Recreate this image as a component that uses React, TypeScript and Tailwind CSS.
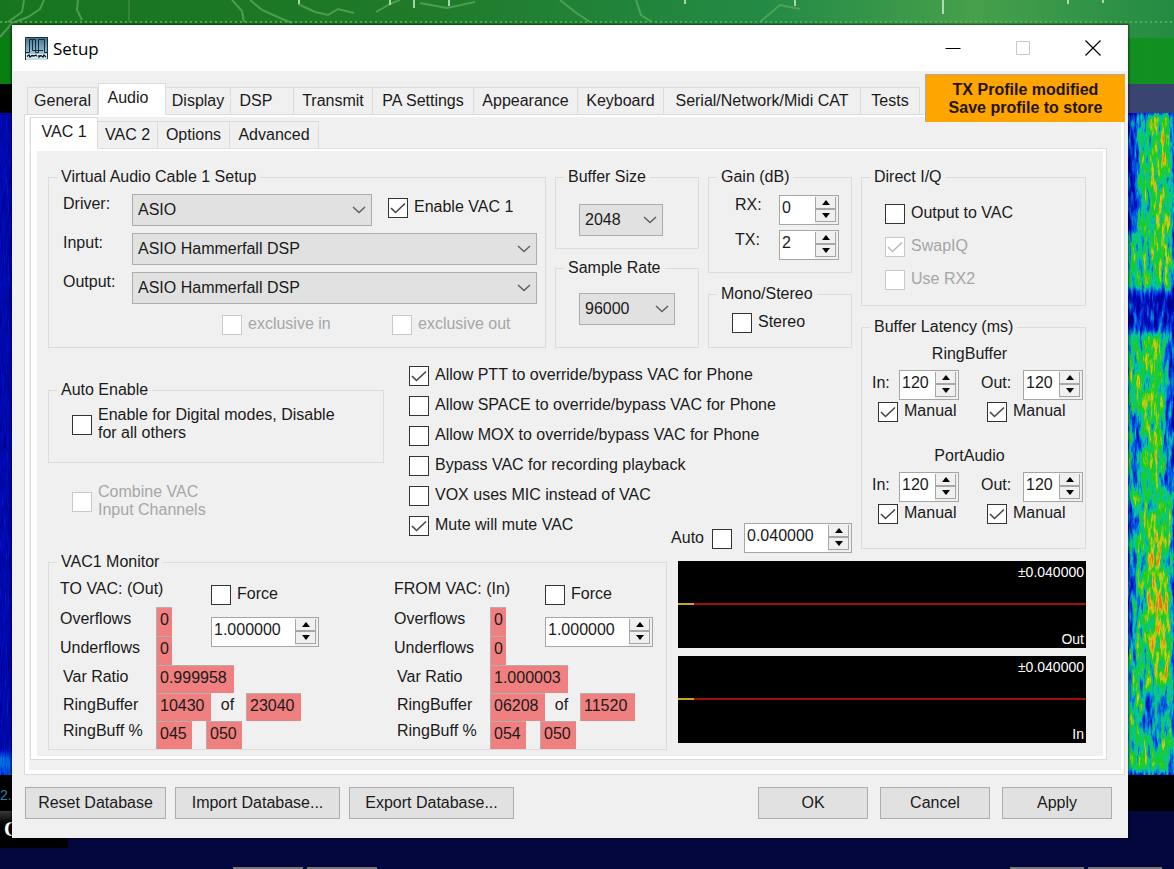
import React, { useId, useState } from "react";
import clsx from "clsx";

const MAIN_TABS = ["General", "Audio", "Display", "DSP", "Transmit", "PA Settings", "Appearance", "Keyboard", "Serial/Network/Midi CAT", "Tests"];
const SUB_TABS = ["VAC 1", "VAC 2", "Options", "Advanced"];

const MAIN_TAB_WIDTHS: Record<string, string> = {
  General: "w-[71px]",
  Audio: "w-[68px] pr-2",
  Display: "w-[65px]",
  DSP: "w-[63px] pr-3",
  Transmit: "w-[79px]",
  "PA Settings": "w-[101px]",
  Appearance: "w-[104px]",
  Keyboard: "w-[86px]",
  "Serial/Network/Midi CAT": "w-[197px]",
  Tests: "w-[59px]",
};

const SUB_TAB_WIDTHS: Record<string, string> = {
  "VAC 1": "w-[68px]",
  "VAC 2": "w-[60px]",
  Options: "w-[72px]",
  Advanced: "w-[89px]",
};

interface TabsProps {
  tabs: string[];
  widths: Record<string, string>;
  active: string;
  onSelect: (tab: string) => void;
  label: string;
}

const Tabs: React.FC<TabsProps> = ({ tabs, widths, active, onSelect, label }) => (
  <div role="tablist" aria-label={label} className="relative z-10 -mb-px flex items-end">
    {tabs.map((tab) => (
      <button
        key={tab}
        role="tab"
        aria-selected={tab === active}
        onClick={() => onSelect(tab)}
        className={clsx(
          "shrink-0 whitespace-nowrap border border-[#dcdcdc]",
          widths[tab],
          tab === active ? "h-8 border-b-white bg-white pb-0.5" : "h-7 border-l-0 bg-[#f0f0f0] first:border-l",
        )}
      >
        {tab}
      </button>
    ))}
  </div>
);

interface GroupProps {
  title: string;
  className?: string;
  children: React.ReactNode;
}

const Group: React.FC<GroupProps> = ({ title, className, children }) => (
  <fieldset className={clsx("min-w-0 border border-[#dcdcdc]", className)}>
    <legend className="ml-2 px-1 leading-[18px]">{title}</legend>
    {children}
  </fieldset>
);

interface CheckProps {
  label: string;
  checked?: boolean;
  disabled?: boolean;
  labelFirst?: boolean;
  className?: string;
}

const Check: React.FC<CheckProps> = ({ label, checked = false, disabled = false, labelFirst = false, className }) => {
  const [on, setOn] = useState(checked);
  return (
    <label className={clsx("flex items-center gap-1.5 leading-[18px]", labelFirst && "flex-row-reverse gap-2", disabled && "text-[#a6a6a6]", className)}>
      <span className="relative flex size-5 shrink-0">
        <input
          type="checkbox"
          checked={on}
          disabled={disabled}
          onChange={(e) => setOn(e.target.checked)}
          className="size-5 appearance-none border border-[#333] bg-white disabled:border-[#c8c8c8]"
        />
        {on && (
          <svg viewBox="0 0 20 20" className={clsx("pointer-events-none absolute inset-0 size-5", disabled ? "text-[#bdbdbd]" : "text-[#444]")}>
            <path d="M3 10 7.500 14.500 17 5.500" fill="none" stroke="currentColor" strokeWidth="1.600" />
          </svg>
        )}
      </span>
      <span className="whitespace-pre pb-0.5">{label}</span>
    </label>
  );
};

interface DropDownProps {
  id?: string;
  label?: string;
  options: string[];
  className?: string;
}

const DropDown: React.FC<DropDownProps> = ({ id, label, options, className }) => (
  <div className={clsx("relative", className)}>
    <select id={id} aria-label={label} className="h-8 w-full appearance-none border border-[#adadad] bg-[#e1e1e1] pl-[5px] outline-none">
      {options.map((option) => (
        <option key={option}>{option}</option>
      ))}
    </select>
    <svg viewBox="0 0 14 8" className="pointer-events-none absolute right-1.5 top-3 h-2 w-3.5">
      <path d="M1 1 7 6.500 13 1" fill="none" stroke="#606060" strokeWidth="1.500" />
    </svg>
  </div>
);

interface SpinProps {
  id?: string;
  label?: string;
  initial: number;
  digits?: number;
  step?: number;
  className?: string;
}

const Spin: React.FC<SpinProps> = ({ id, label, initial, digits = 0, step = 1, className }) => {
  const [value, setValue] = useState(initial.toFixed(digits));
  const bump = (by: number) => setValue((Number(value) + by).toFixed(digits));

  return (
    <div className={clsx("flex h-[30px] shrink-0 border border-[#a6a6a6] bg-[#f0f0f0]", className)}>
      <input id={id} aria-label={label} value={value} onChange={(e) => setValue(e.target.value)} className="w-0 min-w-0 grow bg-white pb-1 pl-0.5 outline-none" />
      <div className="mr-0.5 flex w-[21px] flex-col pb-0.5 pt-px">
        <button aria-label="Increase" onClick={() => bump(step)} className="flex grow items-center justify-center border-x border-b border-[#a6a6a6]">
          <svg viewBox="0 0 8 5" className="h-[5px] w-2"><path d="M0 5 4 0 8 5Z" /></svg>
        </button>
        <button aria-label="Decrease" onClick={() => bump(-step)} className="flex grow items-center justify-center border border-[#a6a6a6]">
          <svg viewBox="0 0 8 5" className="h-[5px] w-2"><path d="M0 0 4 5 8 0Z" /></svg>
        </button>
      </div>
    </div>
  );
};

const LatencyBlock: React.FC<{ title: string }> = ({ title }) => (
  <div>
    <div className="pr-2 text-center">{title}</div>
    <div className="mt-1.5 flex justify-between pl-2.5 pr-0.5">
      {["In", "Out"].map((dir) => (
        <div key={dir}>
          <div className="flex justify-between">
            <label htmlFor={`${title}-${dir}`} className={clsx("pt-1 leading-[18px]", dir === "In" ? "w-[27px]" : "w-[42px]")}>{dir}:</label>
            <Spin id={`${title}-${dir}`} initial={120} className="w-[60px]" />
          </div>
          <Check label="Manual" checked className="mt-0.5 pl-1.5" />
        </div>
      ))}
    </div>
  </div>
);

const Value: React.FC<{ label: string; value: string; className: string }> = ({ label, value, className }) => (
  <input readOnly aria-label={label} value={value} className={clsx("shrink-0 border-l border-t border-[#b0b0b0] bg-[#f08080] pb-1 pl-[3px] outline-none", className)} />
);

interface MonitorProps {
  title: string;
  ratio: string;
  fill: string;
  size: string;
  percent: string;
}

const MonitorHalf: React.FC<MonitorProps> = ({ title, ratio, fill, size, percent }) => (
  <div className="w-[334px] shrink-0">
    <div className="flex">
      <div className="w-[151px]">
        <div className="h-9 leading-9">{title}</div>
        {["Overflows", "Underflows"].map((name) => (
          <div key={name} className="flex h-[29px]">
            <span className="w-24 leading-6">{name}</span>
            <Value label={`${title} ${name}`} value="0" className="w-4" />
          </div>
        ))}
      </div>
      <div className="pt-3.5">
        <Check label="Force" />
        <Spin label={`${title} ratio`} initial={1} digits={6} step={0.000001} className="mt-3 w-[108px]" />
      </div>
    </div>
    <div className="flex h-7">
      <span className="w-24 pl-[3px] leading-6">Var Ratio</span>
      <Value label={`${title} Var Ratio`} value={ratio} className="w-[78px]" />
    </div>
    <div className="flex h-7">
      <span className="w-24 pl-[3px] leading-6">RingBuffer</span>
      <Value label={`${title} RingBuffer`} value={fill} className="w-[55px]" />
      <span className="w-[35px] pr-0.5 text-center leading-6">of</span>
      <Value label={`${title} RingBuffer size`} value={size} className="w-[55px]" />
    </div>
    <div className="flex h-7">
      <span className="w-24 pl-[3px] leading-5">RingBuff %</span>
      <div className="flex gap-3.5">
        <Value label={`${title} RingBuff percent`} value={percent} className="w-9" />
        <Value label={`${title} RingBuff target`} value="050" className="w-9" />
      </div>
    </div>
  </div>
);

const Scope: React.FC<{ name: string }> = ({ name }) => (
  <div className="relative flex h-[87px] flex-col items-end justify-between bg-black px-0.5 text-sm leading-[18px] text-white">
    <span className="pt-0.5">±0.040000</span>
    <span>{name}</span>
    <svg preserveAspectRatio="none" viewBox="0 0 408 2" className="absolute inset-x-0 top-[42px] h-0.5 w-full">
      <path d="M0 1H408" stroke="#dc1010" strokeWidth="1.500" />
      <path d="M0 1H16" stroke="#d8d820" strokeWidth="1.500" />
    </svg>
  </div>
);

const AppButton: React.FC<{ className: string; children: string }> = ({ className, children }) => (
  <button className={clsx("h-8 border border-[#adadad] bg-[#e1e1e1]", className)}>{children}</button>
);

// Spectrum waterfall: grey levels plus noise, mapped onto a blue > green > yellow palette
const Waterfall: React.FC<{ calm?: boolean }> = ({ calm = false }) => {
  const id = useId();
  return (
    <svg viewBox="0 0 48 662" preserveAspectRatio="none" className="size-full">
      <filter id={id} x="0" y="0" width="1" height="1" colorInterpolationFilters="sRGB">
        <feGaussianBlur in="SourceGraphic" stdDeviation="2 5" result="base" />
        <feTurbulence type="fractalNoise" baseFrequency="0.28 0.05" numOctaves="4" seed="7" />
        <feColorMatrix values="1 0 0 0 0  1 0 0 0 0  1 0 0 0 0  0 0 0 0 1" result="noise" />
        <feComposite in="base" in2="noise" operator="arithmetic" k1="0" k2="1" k3={calm ? 0.3 : 0.9} k4={calm ? -0.15 : -0.45} />
        <feComponentTransfer>
          <feFuncR type="table" tableValues="0 0 0 0.02 0.1 0.85 0.95" />
          <feFuncG type="table" tableValues="0 0.05 0.35 0.78 0.8 0.8 0.4" />
          <feFuncB type="table" tableValues="0.55 0.75 0.9 0.65 0.1 0.1 0.05" />
          <feFuncA type="linear" slope="0" intercept="1" />
        </feComponentTransfer>
      </filter>
      <g filter={`url(#${id})`}>
        <rect width="48" height="662" fill={calm ? "#1c1c1c" : "#929292"} />
        {calm ? (
          <rect y="640" width="48" height="22" fill="#555" />
        ) : (
          <>
            <rect width="12" height="120" fill="#404040" />
            <rect x="26" y="0" width="16" height="160" fill="#acacac" />
            <rect y="176" width="48" height="44" fill="#333" />
            <rect x="18" y="220" width="18" height="140" fill="#acacac" />
            <rect x="38" y="225" width="10" height="150" fill="#5c5c5c" />
            <rect x="6" y="300" width="8" height="70" fill="#505050" />
            <rect y="390" width="10" height="150" fill="#5c5c5c" />
            <rect x="22" y="400" width="16" height="140" fill="#c0c0c0" />
            <rect x="30" y="480" width="13" height="90" fill="#c8c8c8" />
            <rect x="16" y="580" width="24" height="40" fill="#606060" />
          </>
        )}
      </g>
    </svg>
  );
};

const Backdrop: React.FC = () => (
  <div aria-hidden="true" className="absolute inset-0 flex flex-col overflow-hidden bg-[#04063e]">
    <div className="relative h-[84px] shrink-0 bg-gradient-to-r from-[#087d10] via-[#2a8a38] to-[#109020]">
      <svg preserveAspectRatio="none" viewBox="0 0 1174 84" className="absolute inset-0 size-full">
        <defs>
          <linearGradient id="sky">
            <stop offset="0" stopColor="#17741f" />
            <stop offset="0.35" stopColor="#1f7a29" />
            <stop offset="0.65" stopColor="#238a45" />
            <stop offset="0.83" stopColor="#46a04c" />
            <stop offset="1" stopColor="#238b42" />
          </linearGradient>
        </defs>
        <rect width="1174" height="38" fill="url(#sky)" />
        <path d="M0 22H1174" stroke="#5fb95c" strokeWidth="1.500" strokeDasharray="2 3" />
        <g fill="none" stroke="#5cab5c" strokeWidth="2" opacity="0.75">
          <path d="M44 0 40 9 28 17 12 23 0 37M24 0 22 12 8 22M78 0 77 10 82 20M232 0 242 11 244 22M250 0 262 10 280 18 292 23" />
          <path d="M298 4 315 12 328 15 338 9 354 13M376 12 392 3 400 0M420 3 447 8 475 2M560 0 575 12 590 22M636 0 641 15 652 22M760 22 780 5 800 9" />
        </g>
        <path d="M129 0V22M894 0V22" stroke="#4e974e" />
        <g stroke="#d9eed8" strokeWidth="1.500">
          <path d="M299 0V4M390 0V5M414 0V8M449 0V6M685 0V4M795 0V6M943 0V14M1068 0V4M1103 0V3" />
        </g>
      </svg>
    </div>
    <div className="flex h-[29px] shrink-0 justify-between bg-black">
      <div className="w-3" />
      <div className="w-12 bg-[#3a4470]" />
    </div>
    <div className="flex h-[662px] shrink-0 justify-between bg-black">
      <div className="w-3"><Waterfall calm /></div>
      <div className="w-12"><Waterfall /></div>
    </div>
    <div className="h-9 shrink-0 bg-black pt-2.5 text-sm leading-5 text-[#2a7fb0]">2.</div>
    <div className="flex h-[37px] w-[68px] shrink-0 bg-gradient-to-b from-[#3a3a3a] via-black to-black pl-1 pt-1 font-['Liberation_Serif',serif] text-xl font-bold text-white">C</div>
    <div className="mt-auto flex h-0.5 shrink-0 justify-between pl-[233px] pr-3">
      <div className="flex gap-1"><div className="w-[70px] bg-[#777]" /><div className="w-[70px] bg-[#777]" /></div>
      <div className="flex gap-1"><div className="w-[74px] bg-[#777]" /><div className="w-[74px] bg-[#777]" /></div>
    </div>
  </div>
);

const App: React.FC = () => {
  const [mainTab, setMainTab] = useState("Audio");
  const [subTab, setSubTab] = useState("VAC 1");

  return (
    <div className="relative min-h-screen pb-[31px] pl-3 pr-[46px] pt-[25px] font-['Liberation_Sans',Arial,sans-serif] text-base leading-5 text-[#1a1a1a]">
      <Backdrop />

      <div className="relative min-w-[1116px] bg-[#f0f0f0] shadow-[0_0_2px_1px_rgba(0,0,0,0.55)]">
        {/* --- TITLE BAR --- */}
        <header className="flex h-[46px] items-center bg-white pl-[13px]">
          <svg viewBox="0 0 23 23" className="size-[23px]">
            <defs>
              <linearGradient id="logo" x2="0" y2="1">
                <stop offset="0" stopColor="#3f6f8c" />
                <stop offset="1" stopColor="#c4e4f0" />
              </linearGradient>
            </defs>
            <rect width="23" height="23" rx="1" fill="url(#logo)" />
            <path d="M.5 23V.5H22.500V22" fill="none" stroke="#1d3038" />
            <path d="M1 15.500H4.500V2.500H10.500V15.500H13.500V2.500H19.500V15.500H22M13.500 4V14M7.500 3V13.500H18" fill="none" stroke="#152c3c" />
            <path d="M1 17H22V21H1Z" fill="#dff0f4" />
            <path d="M2 19.500 4 18 5 20 7 18.500 9 19 11 18 12 19.500M14 18V20L16 18.500 18 20 19 18 21 20" fill="none" stroke="#111" strokeWidth="1.300" />
          </svg>
          <h1 className="grow pl-[5px] pt-0.5 font-['Open_Sans',sans-serif] text-[17px] text-black">Setup</h1>
          <button aria-label="Minimize" className="flex h-full w-[70px] items-center justify-center">
            <svg viewBox="0 0 16 16" className="size-4"><path d="M.5 8.500H15.500" stroke="#000" /></svg>
          </button>
          <button aria-label="Maximize" disabled className="flex h-full w-[70px] items-center justify-center">
            <svg viewBox="0 0 16 16" className="size-4"><path d="M1.500 1.500H14.500V14.500H1.500Z" fill="none" stroke="#c8c8c8" /></svg>
          </button>
          <button aria-label="Close" className="flex h-full w-[70px] items-center justify-center">
            <svg viewBox="0 0 16 16" className="size-4"><path d="M.5.5 15.500 15.500M15.500.5.5 15.500" stroke="#000" strokeWidth="1.200" /></svg>
          </button>
        </header>

        <button className="absolute right-[3px] top-[49px] z-20 h-12 w-[200px] border-l border-t border-[#a9a9a9] bg-[#ffa500] font-bold leading-[18px] text-[#1f1400]">
          TX Profile modified
          <br />
          Save profile to store
        </button>

        <main className="pl-3 pr-[3px] pt-3">
          <div className="pl-[3px]">
            <Tabs label="Setup pages" tabs={MAIN_TABS} widths={MAIN_TAB_WIDTHS} active={mainTab} onSelect={setMainTab} />
          </div>
          <div className="border border-[#dcdcdc] bg-white pb-1 pl-1 pr-[3px] pt-0.5">
            <div className="bg-[#f0f0f0] pb-2.5 pl-px pr-3.5">
              <Tabs label="Audio pages" tabs={SUB_TABS} widths={SUB_TAB_WIDTHS} active={subTab} onSelect={setSubTab} />
              <div className="border border-[#dcdcdc] bg-white pb-[3px] pl-1.5 pr-[3px] pt-0.5">
                <div className="bg-[#f0f0f0] pb-1.5 pl-[11px] pr-[17px] pt-[17px]">
                  <div className="flex gap-[9px]">
                    <div className="flex grow flex-col">
                      <div className="flex gap-[9px]">
                        {/* --- VAC SETUP --- */}
                        <Group title="Virtual Audio Cable 1 Setup" className="grow pb-3">
                          <div className="flex flex-col gap-[7px] pl-3.5 pr-2 pt-2">
                            <div className="flex">
                              <label htmlFor="driver" className="w-[69px] shrink-0">Driver:</label>
                              <DropDown id="driver" options={["ASIO", "MME", "WASAPI"]} className="w-60" />
                              <Check label="Enable VAC 1" checked className="ml-4 mt-1 self-start" />
                            </div>
                            <div className="flex">
                              <label htmlFor="input" className="w-[69px] shrink-0">Input:</label>
                              <DropDown id="input" options={["ASIO Hammerfall DSP"]} className="grow" />
                            </div>
                            <div className="flex">
                              <label htmlFor="output" className="w-[69px] shrink-0">Output:</label>
                              <DropDown id="output" options={["ASIO Hammerfall DSP"]} className="grow" />
                            </div>
                          </div>
                          <div className="flex pl-[173px] pt-[11px]">
                            <Check label="exclusive in" disabled className="w-[170px]" />
                            <Check label="exclusive out" disabled />
                          </div>
                        </Group>

                        <div className="flex w-36 shrink-0 flex-col justify-between">
                          <Group title="Buffer Size" className="pb-3">
                            <DropDown label="Buffer Size" options={["2048", "1024", "512"]} className="ml-[23px] mt-[18px] w-[84px]" />
                          </Group>
                          <Group title="Sample Rate" className="pb-[22px]">
                            <DropDown label="Sample Rate" options={["96000", "48000", "192000"]} className="ml-[23px] mt-4 w-24" />
                          </Group>
                        </div>

                        <div className="flex w-36 shrink-0 flex-col justify-between">
                          <Group title="Gain (dB)" className="pb-3">
                            <div className="flex flex-col gap-[5px] pl-[26px] pr-3 pt-[9px]">
                              <div className="flex justify-between">
                                <label htmlFor="rx-gain">RX:</label>
                                <Spin id="rx-gain" initial={0} className="w-[60px]" />
                              </div>
                              <div className="flex justify-between">
                                <label htmlFor="tx-gain">TX:</label>
                                <Spin id="tx-gain" initial={2} className="w-[60px]" />
                              </div>
                            </div>
                          </Group>
                          <Group title="Mono/Stereo" className="pb-3.5">
                            <Check label="Stereo" className="ml-[23px] mt-2.5" />
                          </Group>
                        </div>
                      </div>

                      {/* --- VAC BEHAVIOUR --- */}
                      <div className="mt-[17px] flex grow">
                        <div className="w-[336px] shrink-0 pt-4">
                          <Group title="Auto Enable" className="pb-[18px]">
                            <Check label={"Enable for Digital modes, Disable\nfor all others"} className="ml-[23px] mt-[7px]" />
                          </Group>
                          <Check label={"Combine VAC\nInput Channels"} disabled className="ml-6 mt-5" />
                        </div>
                        <div className="ml-[25px] flex w-[260px] shrink-0 flex-col gap-2.5 pt-px">
                          <Check label="Allow PTT to override/bypass VAC for Phone" checked />
                          <Check label="Allow SPACE to override/bypass VAC for Phone" />
                          <Check label="Allow MOX to override/bypass VAC for Phone" />
                          <Check label="Bypass VAC for recording playback" />
                          <Check label="VOX uses MIC instead of VAC" />
                          <Check label="Mute will mute VAC" checked />
                        </div>
                        <div className="flex grow items-end justify-end gap-3">
                          <Check label="Auto" labelFirst className="pb-1" />
                          <Spin label="Ratio scale" initial={0.04} digits={6} step={0.01} className="w-[108px]" />
                        </div>
                      </div>
                    </div>

                    <div className="flex w-[225px] shrink-0 flex-col gap-3">
                      <Group title="Direct I/Q" className="pb-[15px]">
                        <div className="flex flex-col gap-[13px] pl-[23px] pt-[18px]">
                          <Check label="Output to VAC" />
                          <Check label="SwapIQ" checked disabled />
                          <Check label="Use RX2" disabled />
                        </div>
                      </Group>
                      <Group title="Buffer Latency (ms)" className="mb-1 pb-6">
                        <div className="flex flex-col gap-6 pt-2">
                          <LatencyBlock title="RingBuffer" />
                          <LatencyBlock title="PortAudio" />
                        </div>
                      </Group>
                    </div>
                  </div>

                  {/* --- MONITOR --- */}
                  <div className="flex items-end gap-[11px]">
                    <Group title="VAC1 Monitor" className="w-[619px] shrink-0">
                      <div className="flex pl-[11px]">
                        <MonitorHalf title="TO VAC: (Out)" ratio="0.999958" fill="10430" size="23040" percent="045" />
                        <MonitorHalf title="FROM VAC: (In)" ratio="1.000003" fill="06208" size="11520" percent="054" />
                      </div>
                    </Group>
                    <div className="flex grow flex-col gap-2 pb-[7px]">
                      <Scope name="Out" />
                      <Scope name="In" />
                    </div>
                  </div>
                </div>
              </div>
            </div>
          </div>
        </main>

        <footer className="flex justify-between pb-[19px] pl-[13px] pr-4 pt-3">
          <div className="flex gap-[9px]">
            <AppButton className="w-[141px]">Reset Database</AppButton>
            <AppButton className="w-[165px]">Import Database...</AppButton>
            <AppButton className="w-[165px]">Export Database...</AppButton>
          </div>
          <div className="flex gap-3">
            <AppButton className="w-[110px]">OK</AppButton>
            <AppButton className="w-[110px]">Cancel</AppButton>
            <AppButton className="w-[110px]">Apply</AppButton>
          </div>
        </footer>
      </div>
    </div>
  );
};

export default App;
